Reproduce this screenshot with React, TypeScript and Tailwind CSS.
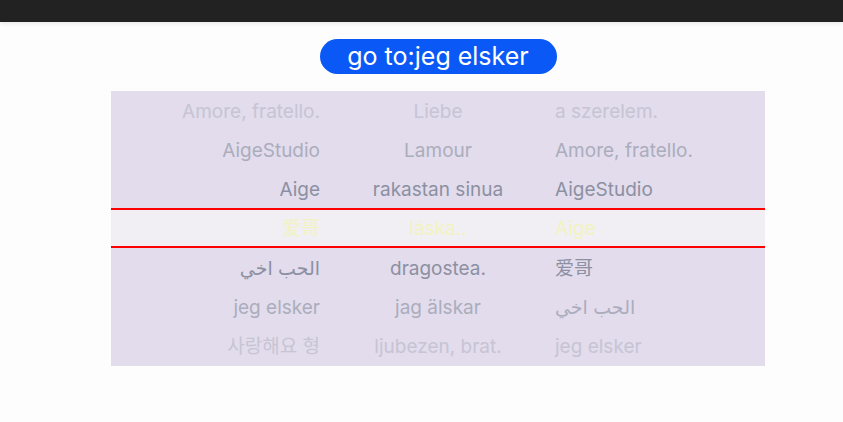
import React from "react";

const rows: string[][] = [
  ["Amore, fratello.", "Liebe", "a szerelem."],
  ["AigeStudio", "Lamour", "Amore, fratello."],
  ["Aige", "rakastan sinua", "AigeStudio"],
  ["爱哥", "láska..", "Aige"],
  ["الحب اخي", "dragostea.", "爱哥"],
  ["jeg elsker", "jag älskar", "الحب اخي"],
  ["사랑해요 형", "ljubezen, brat.", "jeg elsker"],
];

// text colour per row, fading out from the middle
const tones = [
  "text-[#c7c4d4]",
  "text-[#abadbd]",
  "text-[#8c90a2]",
  "text-[#f1f3c0]",
  "text-[#8c90a2]",
  "text-[#abadbd]",
  "text-[#c7c4d4]",
];

export default function App() {
  return (
    <div
      className="h-[422px] w-[843px] bg-[#fdfdfd] overflow-hidden"
      style={{ fontFamily: 'Inter, "Noto Sans", "Noto Sans CJK SC", "Noto Sans CJK KR", "DejaVu Sans", sans-serif' }}
    >
      {/* status bar */}
      <div className="h-[22px] bg-[#222222] shadow-[0_2px_4px_rgba(0,0,0,0.08)]" />

      <div className="flex flex-col items-center pt-[17px] pl-[33px]">
        <button className="h-[35px] w-[237px] rounded-full bg-[#0a59f7] text-white text-[25px] leading-none flex items-center justify-center pb-[1px]">
          go to:jeg elsker
        </button>

        {/* picker */}
        <div className="mt-[17px] w-[654px] bg-[#e2dcec] flex flex-col">
          {rows.map((r, i) => {
            const sel = i === 3;
            return (
              <div
                key={i}
                className={
                  sel
                    ? "grid grid-cols-3 h-[40px] pt-[3px] bg-[#f1eef4] border-y-2 border-[#ff0000] items-center text-[19px]"
                    : i === 6
                    ? "grid grid-cols-3 h-[40px] pt-[3px] items-center text-[19px]"
                    : "grid grid-cols-3 h-[39px] pt-[3px] items-center text-[19px]"
                }
              >
                <span className={"text-right pr-[9px] " + tones[i]}>{r[0]}</span>
                <span className={"text-center " + tones[i]}>{r[1]}</span>
                <span className={"text-left pl-[8px] " + tones[i]}>{r[2]}</span>
              </div>
            );
          })}
        </div>
      </div>
    </div>
  );
}
